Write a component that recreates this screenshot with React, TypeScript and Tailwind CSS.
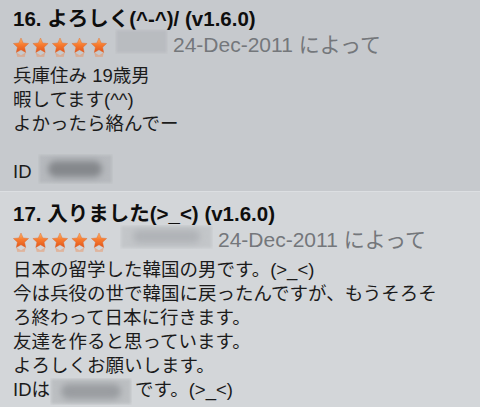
import React from "react";

const STAR =
  "M8 0.5 L10.23 5.43 L15.61 6.03 L11.61 9.67 L12.7 14.97 L8 12.3 L3.3 14.97 L4.39 9.67 L0.39 6.03 L5.77 5.43 Z";

function Stars({ id }: { id: string }) {
  return (
    <svg width="100" height="24" viewBox="0 0 100 24" className="shrink-0">
      <defs>
        <linearGradient id={`${id}-s`} x1="0" y1="0" x2="0" y2="1">
          <stop offset="0" stopColor="#ffb36a" />
          <stop offset="0.45" stopColor="#f77d31" />
          <stop offset="1" stopColor="#e2541a" />
        </linearGradient>
        <linearGradient id={`${id}-r`} x1="0" y1="0" x2="0" y2="1">
          <stop offset="0" stopColor="#ee8a52" stopOpacity="0" />
          <stop offset="1" stopColor="#ee8a52" stopOpacity="0.55" />
        </linearGradient>
      </defs>
      {[0, 1, 2, 3, 4].map((i) => (
        <g key={i} transform={`translate(${i * 19.5},4.5)`}>
          <path d={STAR} fill={`url(#${id}-r)`} transform="matrix(1 0 0 -1 0 30)" />
          <path d={STAR} fill={`url(#${id}-s)`} stroke="#d9642a" strokeWidth="0.4" />
        </g>
      ))}
    </svg>
  );
}

// blurred-out user name / id
function Smudge({ w, h, base, core }: { w: number; h: number; base: string; core?: string }) {
  return (
    <span className="relative inline-block shrink-0 overflow-hidden" style={{ width: w, height: h }}>
      <span className={`absolute inset-[1px] blur-[1.5px] ${base}`} />
      {core && <span className={`absolute inset-x-[14%] inset-y-[24%] rounded-full blur-[3px] ${core}`} />}
    </span>
  );
}

export default function App() {
  return (
    <div className="w-[480px] h-[407px] overflow-hidden font-['Liberation_Sans','Noto_Sans_CJK_JP',sans-serif]">
      {/* Review 16 */}
      <div className="h-[191px] bg-[#c6c9cd] px-[13px] pt-[7px]">
        <div className="text-[20.5px] leading-[24px] font-bold text-[#0e0e0e] whitespace-nowrap">
          16. よろしく(^-^)/ (v1.6.0)
        </div>
        <div className="mt-[2px] flex h-[24px] items-center">
          <Stars id="a" />
          <span className="ml-[2px]">
            <Smudge w={53} h={25} base="bg-[#b9bcc0]" />
          </span>
          <span className="ml-[5px] text-[21px] leading-[24px] text-[#74777b] whitespace-nowrap">
            24-Dec-2011 によって
          </span>
        </div>
        <div className="mt-[7px] text-[18.5px] leading-[24px] text-[#1b1b1b]">
          <div>兵庫住み 19歳男</div>
          <div>暇してます(^^)</div>
          <div>よかったら絡んでー</div>
          <div className="h-[24px]" />
          <div className="flex h-[24px] items-center">
            <span>ID</span>
            <span className="ml-[6px] -my-[3px]">
              <Smudge w={75} h={30} base="bg-[#b6b9bd]" core="bg-[#85888c]" />
            </span>
          </div>
        </div>
      </div>

      {/* Review 17 */}
      <div className="h-[216px] border-t border-[#dcdfe2] bg-[#d3d6d9] px-[13px] pt-[10px]">
        <div className="text-[20.5px] leading-[24px] font-bold text-[#0e0e0e] whitespace-nowrap">
          17. 入りました(&gt;_&lt;) (v1.6.0)
        </div>
        <div className="mt-[2px] flex h-[24px] items-center">
          <Stars id="b" />
          <span className="ml-[7px]">
            <Smudge w={93} h={24} base="bg-[#c3c6c9]" core="bg-[#b0b3b7]" />
          </span>
          <span className="ml-[5px] text-[21px] leading-[24px] text-[#74777b] whitespace-nowrap">
            24-Dec-2011 によって
          </span>
        </div>
        <div className="mt-[6px] text-[18.5px] leading-[24px] text-[#1b1b1b] whitespace-nowrap">
          <div>日本の留学した韓国の男です。(&gt;_&lt;)</div>
          <div>今は兵役の世で韓国に戻ったんですが、もうそろそ</div>
          <div>ろ終わって日本に行きます。</div>
          <div>友達を作ると思っています。</div>
          <div>よろしくお願いします。</div>
          <div className="flex h-[24px] items-start">
            <span>IDは</span>
            <Smudge w={82} h={27} base="bg-[#bcbfc2]" core="bg-[#9a9da1]" />
            <span className="ml-[3px]">です。(&gt;_&lt;)</span>
          </div>
        </div>
      </div>
    </div>
  );
}
